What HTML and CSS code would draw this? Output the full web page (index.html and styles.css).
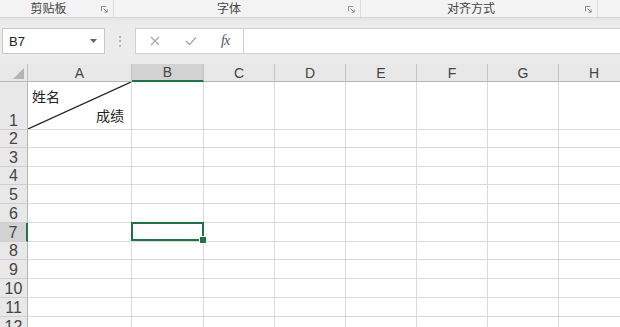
FILE: index.html
```html
<!DOCTYPE html>
<html>

<head>
    <meta charset="utf-8">
    <title>Sheet</title>
    <link rel="stylesheet" href="styles.css">
</head>

<body>
    <!-- ribbon group captions -->
    <div class="ribbon">
        <div class="group g-clip">
            <span>剪贴板</span>
            <svg class="launcher" viewBox="0 0 8 8"><path d="M0.5 6V0.5H6" /><path d="M3 3L7 7M7 4V7H4" /></svg>
        </div>
        <div class="group g-font">
            <span>字体</span>
            <svg class="launcher" viewBox="0 0 8 8"><path d="M0.5 6V0.5H6" /><path d="M3 3L7 7M7 4V7H4" /></svg>
        </div>
        <div class="group g-align">
            <span>对齐方式</span>
            <svg class="launcher" viewBox="0 0 8 8"><path d="M0.5 6V0.5H6" /><path d="M3 3L7 7M7 4V7H4" /></svg>
        </div>
        <div class="group g-rest"></div>
    </div>

    <!-- formula bar -->
    <div class="toolbar">
        <div class="namebox">
            <span>B7</span>
            <svg class="caret" viewBox="0 0 7 4"><path d="M0 0H7L3.5 4Z" /></svg>
        </div>
        <div class="grip">⋮</div>
        <div class="fx-buttons">
            <svg class="btn" viewBox="0 0 10 10"><path d="M1 1L9 9M9 1L1 9" /></svg>
            <svg class="btn" viewBox="0 0 12 10"><path d="M1 5L4.5 8.5L11 1.5" /></svg>
            <span class="fx">fx</span>
        </div>
        <div class="formula"></div>
    </div>

    <!-- worksheet -->
    <div class="sheet">
        <div class="corner"><svg viewBox="0 0 12 12"><path d="M12 0V12H0Z" /></svg></div>
        <div class="ch">A</div>
        <div class="ch sel">B</div>
        <div class="ch">C</div>
        <div class="ch">D</div>
        <div class="ch">E</div>
        <div class="ch">F</div>
        <div class="ch">G</div>
        <div class="ch">H</div>

        <div class="rh">1</div>
        <div class="cell diag">
            <svg class="slash" viewBox="0 0 100 100" preserveAspectRatio="none"><line x1="0" y1="100" x2="100" y2="0" /></svg>
            <span class="top">姓名</span>
            <span class="bottom">成绩</span>
        </div>
        <div class="cell"></div><div class="cell"></div><div class="cell"></div><div class="cell"></div><div class="cell"></div><div class="cell"></div><div class="cell"></div>

        <div class="rh">2</div>
        <div class="cell"></div><div class="cell"></div><div class="cell"></div><div class="cell"></div><div class="cell"></div><div class="cell"></div><div class="cell"></div><div class="cell"></div>
        <div class="rh">3</div>
        <div class="cell"></div><div class="cell"></div><div class="cell"></div><div class="cell"></div><div class="cell"></div><div class="cell"></div><div class="cell"></div><div class="cell"></div>
        <div class="rh">4</div>
        <div class="cell"></div><div class="cell"></div><div class="cell"></div><div class="cell"></div><div class="cell"></div><div class="cell"></div><div class="cell"></div><div class="cell"></div>
        <div class="rh">5</div>
        <div class="cell"></div><div class="cell"></div><div class="cell"></div><div class="cell"></div><div class="cell"></div><div class="cell"></div><div class="cell"></div><div class="cell"></div>
        <div class="rh">6</div>
        <div class="cell"></div><div class="cell"></div><div class="cell"></div><div class="cell"></div><div class="cell"></div><div class="cell"></div><div class="cell"></div><div class="cell"></div>
        <div class="rh sel">7</div>
        <div class="cell"></div><div class="cell active"></div><div class="cell"></div><div class="cell"></div><div class="cell"></div><div class="cell"></div><div class="cell"></div><div class="cell"></div>
        <div class="rh">8</div>
        <div class="cell"></div><div class="cell"></div><div class="cell"></div><div class="cell"></div><div class="cell"></div><div class="cell"></div><div class="cell"></div><div class="cell"></div>
        <div class="rh">9</div>
        <div class="cell"></div><div class="cell"></div><div class="cell"></div><div class="cell"></div><div class="cell"></div><div class="cell"></div><div class="cell"></div><div class="cell"></div>
        <div class="rh">10</div>
        <div class="cell"></div><div class="cell"></div><div class="cell"></div><div class="cell"></div><div class="cell"></div><div class="cell"></div><div class="cell"></div><div class="cell"></div>
        <div class="rh">11</div>
        <div class="cell"></div><div class="cell"></div><div class="cell"></div><div class="cell"></div><div class="cell"></div><div class="cell"></div><div class="cell"></div><div class="cell"></div>
        <div class="rh">12</div>
        <div class="cell"></div><div class="cell"></div><div class="cell"></div><div class="cell"></div><div class="cell"></div><div class="cell"></div><div class="cell"></div><div class="cell"></div>
    </div>
</body>

</html>
```

FILE: styles.css
```css
:root {
    --ribbon: #f3f3f3;
    --toolbar: #ececec;
    --grid: #dadada;
    --header: #e8e8e8;
    --header-line: #c4c4c4;
    --header-sel: #d2d2d2;
    --green: #217346;
    --text: #333;
}

* {
    box-sizing: border-box;
    padding: 0;
    margin: 0;
}

body {
    width: 620px;
    height: 327px;
    overflow: hidden;
    background: #fff;
    color: var(--text);
    font-family: "Liberation Sans", "Noto Sans CJK SC", sans-serif;
}

/* ribbon captions */
.ribbon {
    display: flex;
    height: 18px;
    background: var(--ribbon);
    border-bottom: 1px solid #d6d6d6;
    font-family: "Noto Sans CJK SC", sans-serif;
    font-size: 12px;
    color: #444;
}

.group {
    position: relative;
    display: flex;
    align-items: center;
    justify-content: center;
    padding-right: 16px;
    border-right: 1px solid #dcdcdc;
    height: 17px;
}

.group span {
    line-height: 15px;
    margin-top: -3px;
}

.g-clip { width: 114px; }
.g-font { width: 247px; }
.g-align { width: 237px; }
.g-rest { flex: 1; border-right: none; }

.launcher {
    position: absolute;
    right: 5px;
    top: 6px;
    width: 7px;
    height: 7px;
    fill: none;
    stroke: #777;
    stroke-width: 1;
}

/* formula bar */
.toolbar {
    display: flex;
    align-items: stretch;
    height: 46px;
    padding: 10px 0 10px 2px;
    background: linear-gradient(#e4e4e4, var(--toolbar) 6px);
}

.namebox {
    display: flex;
    align-items: center;
    justify-content: space-between;
    width: 103px;
    padding: 0 7px 0 6px;
    background: #fff;
    border: 1px solid #c8c8c8;
    font-size: 13px;
    color: #222;
}

.caret {
    width: 7px;
    height: 4px;
    fill: #666;
}

.grip {
    width: 30px;
    display: flex;
    align-items: center;
    justify-content: center;
    color: #999;
    font-size: 12px;
}

.fx-buttons {
    display: flex;
    align-items: center;
    gap: 24px;
    width: 108px;
    padding-left: 13px;
    background: #fff;
    border: 1px solid #d0d0d0;
    border-right: none;
}

.btn {
    width: 12px;
    height: 10px;
    fill: none;
    stroke: #a8a8a8;
    stroke-width: 1.3;
}

.fx {
    font-family: "Liberation Serif", serif;
    font-style: italic;
    font-size: 14px;
    color: #555;
    letter-spacing: -1px;
}

.formula {
    flex: 1;
    background: #fff;
    border: 1px solid #d0d0d0;
    border-right: none;
}

/* worksheet grid */
.sheet {
    display: grid;
    grid-template-columns: 28px 104px 72px 71px 71px 71px 71px 71px 71px;
    grid-template-rows: 18px 48px 18px 19px 18px 19px 19px 19px 18px 19px 19px 19px 19px;
    width: 630px;
}

.corner {
    display: flex;
    align-items: flex-end;
    justify-content: flex-end;
    padding: 0 3px 2px 0;
    background: var(--header);
    border-right: 1px solid var(--header-line);
    border-bottom: 1px solid #b6b6b6;
}

.corner svg {
    width: 11px;
    height: 11px;
    fill: #b3b3b3;
}

.ch {
    display: flex;
    align-items: center;
    justify-content: center;
    background: var(--header);
    border-right: 1px solid var(--header-line);
    border-bottom: 1px solid #b6b6b6;
    font-size: 14px;
    color: #444;
}

.ch.sel {
    background: var(--header-sel);
    border-bottom: 2px solid var(--green);
}

.rh {
    display: flex;
    align-items: flex-end;
    justify-content: center;
    background: var(--header);
    border-right: 1px solid #b6b6b6;
    border-bottom: 1px solid #cfcfcf;
    font-size: 16px;
    line-height: 17px;
    color: #444;
}

.rh.sel {
    background: var(--header-sel);
    border-right: 2px solid var(--green);
}

.cell {
    border-right: 1px solid var(--grid);
    border-bottom: 1px solid var(--grid);
}

/* header cell with a diagonal split */
.diag {
    position: relative;
    display: flex;
    flex-direction: column;
    justify-content: space-between;
    padding: 5px 7px 5px 4px;
    font-family: "Noto Sans CJK SC", sans-serif;
    font-size: 14px;
    line-height: 18px;
    color: #222;
}

.diag .bottom {
    align-self: flex-end;
}

.slash {
    position: absolute;
    left: 0;
    top: 0;
    width: 100%;
    height: 100%;
    stroke: #222;
    stroke-width: 1.2;
    vector-effect: non-scaling-stroke;
}

.slash line {
    vector-effect: non-scaling-stroke;
}

/* active cell */
.active {
    position: relative;
}

.active::before {
    content: "";
    position: absolute;
    left: -1px;
    top: -1px;
    right: -1px;
    bottom: 0;
    border: 2px solid var(--green);
}

.active::after {
    content: "";
    position: absolute;
    right: -4px;
    bottom: -3px;
    width: 6px;
    height: 6px;
    background: var(--green);
    border: 1px solid #fff;
}
```
